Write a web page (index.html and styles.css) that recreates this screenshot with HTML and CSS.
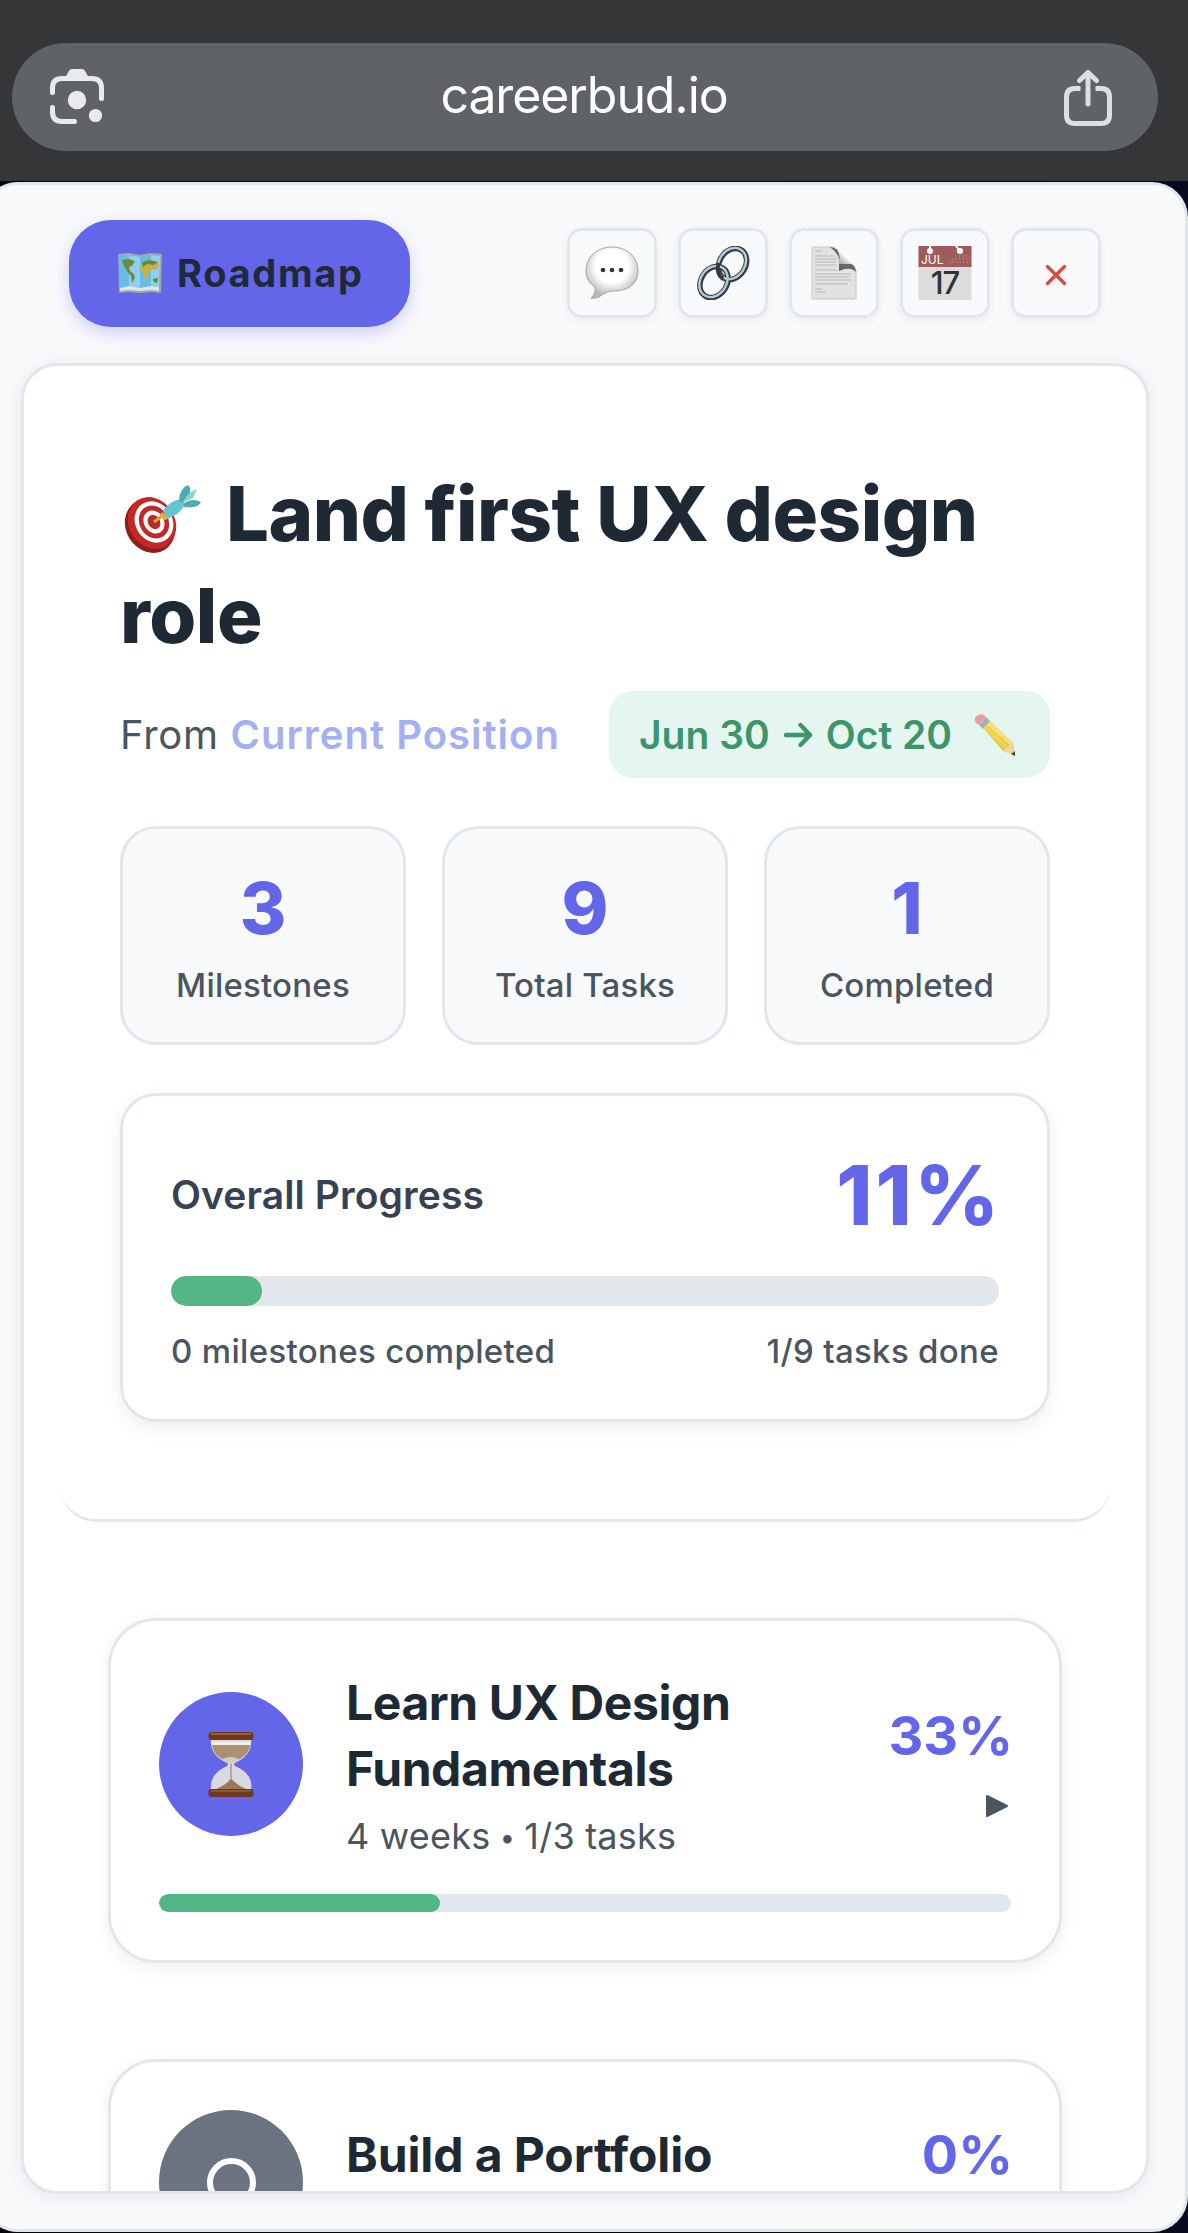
FILE: index.html
```html
<!DOCTYPE html>
<html lang="en">
<head>
    <meta charset="UTF-8">
    <meta name="viewport" content="width=device-width, initial-scale=1.0">
    <title>Roadmap</title>
    <link rel="stylesheet" href="styles.css">
</head>
<body>
    <header class="browser-bar">
        <div class="address">
            <svg class="lens-icon" viewBox="0 0 56 64" fill="none" stroke="#e8eaf0" stroke-width="5" stroke-linecap="round">
                <path d="M3.500 27.500V23Q3.500 13.500 13 13.500H43Q52.500 13.500 52.500 23V33.500M3.500 42.500V47Q3.500 56.500 13 56.500H25.500"/>
                <path d="M16 13L20 6Q21 4 23 4H33Q35 4 36 6L40 13Z" fill="#e8eaf0" stroke="none"/>
                <circle cx="28" cy="35" r="9.200" fill="#e8eaf0" stroke="none"/>
                <circle cx="46.500" cy="50.500" r="6.600" fill="#e8eaf0" stroke="none"/>
            </svg>
            <span class="url">careerbud.io</span>
            <svg class="share-icon" viewBox="0 0 50 60" fill="none" stroke="#dcdfe4" stroke-width="5" stroke-linecap="round" stroke-linejoin="round">
                <path d="M17.500 21.500H12Q3.500 21.500 3.500 30V48Q3.500 56.500 12 56.500H38Q46.500 56.500 46.500 48V30Q46.500 21.500 38 21.500H32.500" stroke-linecap="butt"/>
                <path d="M25 37V5.500M16.500 13.500L25 5.500L33.500 13.500"/>
            </svg>
        </div>
    </header>

    <main class="modal">
        <div class="toolbar">
            <button class="roadmap-btn">
                <svg class="map-icon" viewBox="0 0 46 42">
                    <path d="M1 2L12 1L23 3L34 1L45 2L44 41L34 40L23 41L12 40L2 41Z" fill="#a2a9a5"/>
                    <path d="M3 4L12 3L23 5L34 3L43 4L42 35L34 34L23 36L12 34L3 36Z" fill="#66bdea"/>
                    <path d="M12 3L23 5V36L12 34ZM34 3L43 4L42 35L34 34Z" fill="#8ed0f0"/>
                    <path d="M3 36L12 34L23 36L34 34L42 35V39L34 38L23 39L12 38L3 39Z" fill="#dfe7e6"/>
                    <path d="M5 8L12 7L18 9L15 14L12 15L13 19L17 22L18 26L15 31L14 24L10 19L7 14Z" fill="#718a39"/>
                    <path d="M24 13L29 8L40 9L42 13L39 18L35 17L32 20L30 28L27 27L26 20L22 17Z" fill="#c1b345"/>
                    <path d="M25 10L32 8L41 10L37 13L30 12L26 15ZM36 27L41 26L40 31L37 30Z" fill="#688737"/>
                </svg>
                <span>Roadmap</span>
            </button>
            <div class="actions">
                <button class="icon-btn">
                    <svg width="54" height="54" viewBox="0 0 54 54">
                        <defs>
                            <radialGradient id="bubble" cx="50%" cy="38%" r="58%">
                                <stop offset=".55" stop-color="#fff"/>
                                <stop offset="1" stop-color="#b9b9b9"/>
                            </radialGradient>
                        </defs>
                        <path d="M27 1C42 1 53 11 53 25S42 45 28 45C23 45 18 48 14 51Q9 53 6 52Q11 48 10 41C4 37 1 32 1 25C1 11 12 1 27 1Z" fill="url(#bubble)" stroke="#a5a5a5"/>
                        <g fill="#333"><circle cx="18" cy="24" r="2.300"/><circle cx="27" cy="24" r="2.300"/><circle cx="36" cy="24" r="2.300"/></g>
                    </svg>
                </button>
                <button class="icon-btn">
                    <svg width="54" height="54" viewBox="0 0 54 54" fill="none">
                        <g stroke="#343b42" stroke-width="5.500">
                            <ellipse cx="36.500" cy="18" rx="13" ry="16.500" transform="rotate(33 36.500 18)"/>
                            <ellipse cx="18" cy="36" rx="13" ry="16.500" transform="rotate(33 18 36)"/>
                        </g>
                        <g stroke="#b9cbd9" stroke-width="2.400">
                            <ellipse cx="36" cy="17.500" rx="13" ry="16.500" transform="rotate(33 36 17.500)"/>
                            <ellipse cx="17.500" cy="35.500" rx="13" ry="16.500" transform="rotate(33 17.500 35.500)"/>
                        </g>
                        <path d="M22.500 17Q20 28 27 33" stroke="#343b42" stroke-width="4"/>
                    </svg>
                </button>
                <button class="icon-btn">
                    <svg width="46" height="54" viewBox="0 0 46 54">
                        <defs>
                            <linearGradient id="curl" x1="1" y1="0" x2="0.200" y2="1">
                                <stop offset="0" stop-color="#f3f3f3"/>
                                <stop offset=".5" stop-color="#dcdcdc"/>
                                <stop offset="1" stop-color="#555"/>
                            </linearGradient>
                        </defs>
                        <path d="M1 1H22Q28 2 29 14Q44 16 45 25V53H1Z" fill="#e2e2e2" stroke="#c7c7c7"/>
                        <path d="M20 1Q27 1 29 7L44 21Q46 24 45 28Q40 18 28 25Q30 8 20 1Z" fill="url(#curl)"/>
                        <path d="M19 1Q27 2 28 8L29 14Q26 6 19 1ZM28 18H40Q44 19 45 26Q39 20 28 25Z" fill="#666"/>
                        <path d="M4 5H11M4 10H24M4 13H26M4 16H25M4 19H26M4 24H26M4 28H40M4 31H38M4 34H40M4 38H37M4 43H11M4 46H15" stroke="#b8b8b8"/>
                    </svg>
                </button>
                <button class="icon-btn">
                    <svg width="54" height="54" viewBox="0 0 54 54">
                        <path d="M0.500 0H53.500V54H0.500Z" fill="#dcdcdc"/>
                        <path d="M0.500 0H53.500V21H0.500Z" fill="#a05b5b"/>
                        <path d="M12 0V5M38 0L42 5" stroke="#fff" stroke-width="2"/>
                        <circle cx="12" cy="5" r="3" fill="#fff"/><circle cx="42" cy="5" r="3" fill="#fff"/>
                        <path d="M37 10H52M34 13H52M31 16H52" stroke="#c69999" stroke-dasharray="1.500 2"/>
                        <text class="cal-month" x="3" y="18">JUL</text>
                        <text class="cal-day" x="27" y="48">17</text>
                    </svg>
                </button>
                <button class="icon-btn">
                    <svg class="close-icon" width="22" height="22" viewBox="0 0 22 22" stroke="#d84b41" stroke-width="3.400" stroke-linecap="round">
                        <path d="M2.500 2.500L19.500 19.500M19.500 2.500L2.500 19.500"/>
                    </svg>
                </button>
            </div>
        </div>

        <section class="panel">
            <div class="goal">
                <h1>
                    <svg class="target-icon" viewBox="0 0 78 68">
                        <ellipse cx="27" cy="41" rx="24" ry="28" transform="rotate(-32 27 41)" fill="#8e1d1c"/>
                        <ellipse cx="29" cy="38" rx="23" ry="27" transform="rotate(-32 29 38)" fill="#c22925"/>
                        <ellipse cx="31" cy="37" rx="18.500" ry="21.500" transform="rotate(-32 31 37)" fill="#fff"/>
                        <ellipse cx="31" cy="37" rx="14.500" ry="17" transform="rotate(-32 31 37)" fill="#bd2a27"/>
                        <ellipse cx="31" cy="37" rx="10" ry="12" transform="rotate(-32 31 37)" fill="#fff"/>
                        <ellipse cx="31" cy="37" rx="6" ry="7.500" transform="rotate(-32 31 37)" fill="#b92925"/>
                        <path d="M31 37L43 28" stroke="#d9a534" stroke-width="3"/>
                        <path d="M38 27L47 33L42 35L38 32Z" fill="#e3af35"/>
                        <path d="M40 26Q45 17 57 14L61 21Q57 29 46 33Q42 32 40 26Z" fill="#65c5cd"/>
                        <path d="M56 15Q57 3 65 0Q69 3 66 11L60 19ZM60 19Q69 12 78 17Q75 24 61 22Z" fill="#4eaab4"/>
                        <path d="M59 18L66 8L74 4L70 13Z" fill="#8bd2d6"/>
                    </svg><span>Land first UX design</span> role
                </h1>
                <div class="goal-meta">
                    <p class="from">From <strong>Current Position</strong></p>
                    <div class="dates">
                        <span>Jun 30</span>
                        <svg class="arrow" viewBox="0 0 30 26" fill="none" stroke="#3f956a" stroke-width="4.400" stroke-linecap="round" stroke-linejoin="round"><path d="M3 13H27M17.500 3L27 13L17.500 23"/></svg>
                        <span>Oct 20</span>
                        <svg class="pencil-icon" viewBox="0 0 42 42">
                            <path d="M10 15L16 7L39 29L41 41L29 37Z" fill="#e7c653"/>
                            <path d="M13 11L16 7L39 29L37 32Z" fill="#f6df79"/>
                            <path d="M10 15L13 11L35 33L32 36Z" fill="#f2d350"/>
                            <path d="M29 37L38 28L41 41Z" fill="#eed69f"/>
                            <path d="M37 40L41 37L41 42Z" fill="#444"/>
                            <path d="M5 11L12 3L16 7L9 15Z" fill="#a7adb2"/>
                            <path d="M1 7Q0 2 5 1Q9-1 12 3L5 11Q2 10 1 7Z" fill="#e5a0a0"/>
                        </svg>
                    </div>
                </div>
                <div class="stats">
                    <div class="stat"><b>3</b><span>Milestones</span></div>
                    <div class="stat"><b>9</b><span>Total Tasks</span></div>
                    <div class="stat"><b>1</b><span>Completed</span></div>
                </div>
                <div class="progress-card">
                    <div class="progress-head">
                        <span class="progress-title">Overall Progress</span>
                        <span class="progress-value">11%</span>
                    </div>
                    <div class="track"><div class="fill" style="width: 11%"></div></div>
                    <div class="progress-foot">
                        <span>0 milestones completed</span>
                        <span>1/9 tasks done</span>
                    </div>
                </div>
            </div>

            <div class="milestones">
                <article class="milestone">
                    <div class="milestone-head">
                        <div class="status active">
                            <svg width="46" height="66" viewBox="0 0 46 66">
                                <path d="M3 8H43Q45 24 27 32Q25 33 27 35Q46 43 43 59H3Q1 43 19 35Q21 33 19 32Q1 24 3 8Z" fill="#d8d9e5"/>
                                <path d="M4 14H42Q41 25 27 30L23 32L19 30Q5 25 4 14Z" fill="#aa9173"/>
                                <path d="M4 11H42V14H4Z" fill="#f4eee8"/>
                                <path d="M22.500 30H23.500V48Q29 54 38 58H8Q18 54 22.500 48Z" fill="#9a7a52"/>
                                <path d="M14 28Q23 24 31 28L24 33H22Z" fill="#d1cbc3"/>
                                <rect x="0.500" y="1" width="45" height="8" rx="3" fill="#6b3820"/>
                                <path d="M3 3H43" stroke="#ac6742" stroke-width="1.500"/>
                                <rect x="0.500" y="58" width="45" height="8" rx="3" fill="#6b3820"/>
                                <path d="M3 60H43" stroke="#a25d39" stroke-width="1.500"/>
                            </svg>
                        </div>
                        <div class="milestone-info">
                            <h2>Learn UX Design Fundamentals</h2>
                            <p>4 weeks <span class="dot">•</span> 1/3 tasks</p>
                        </div>
                        <div class="milestone-side">
                            <span class="percent">33%</span>
                            <svg class="caret" viewBox="0 0 24 24"><path d="M2 2L22 12L2 22Z"/></svg>
                        </div>
                    </div>
                    <div class="track thin"><div class="fill" style="width: 33%"></div></div>
                </article>

                <article class="milestone">
                    <div class="milestone-head">
                        <div class="status"><span class="ring"></span></div>
                        <div class="milestone-info short">
                            <h2>Build a Portfolio</h2>
                        </div>
                        <div class="milestone-side">
                            <span class="percent">0%</span>
                            <svg class="caret" viewBox="0 0 24 24"><path d="M2 2L22 12L2 22Z"/></svg>
                        </div>
                    </div>
                    <div class="track thin"></div>
                </article>
            </div>
        </section>
    </main>
</body>
</html>
```
FILE: styles.css
```css
* {
    box-sizing: border-box;
}
body {
    margin: 0;
    height: 2233px;
    overflow: hidden;
    background: linear-gradient(90deg, #050507 60%, #090a20);
    font-family: Inter, "Liberation Sans", sans-serif;
    color: #1f2933;
}
h1, h2, p {
    margin: 0;
}
svg {
    display: block;
    flex-shrink: 0;
}
button {
    font-family: inherit;
    padding: 0;
}

/* Browser bar */
.browser-bar {
    height: 181px;
    padding: 43px 30px 30px 12px;
    background: #353638;
}
.address {
    display: flex;
    align-items: center;
    justify-content: space-between;
    height: 108px;
    padding: 0 45px 0 37px;
    border-radius: 54px;
    background: #5f6266;
}
.lens-icon {
    width: 56px;
    height: 64px;
}
.url {
    padding-bottom: 4px;
    color: #fff;
    font-size: 50px;
    line-height: 60px;
    letter-spacing: -1.1px;
}
.share-icon {
    width: 50px;
    height: 60px;
}

/* Modal */
.modal {
    width: 1206px;
    height: 2050px;
    margin: 1px 0 0 -18px;
    padding: 35px 36px;
    border: 3px solid #e2e7eb;
    border-radius: 36px;
    background: #f8f9fb;
}
.toolbar {
    display: flex;
    align-items: center;
    justify-content: space-between;
    height: 107px;
    padding: 0 48px;
    margin-bottom: 36px;
}
.roadmap-btn {
    display: flex;
    align-items: center;
    gap: 14px;
    width: 341px;
    height: 107px;
    padding: 0 0 2px 48px;
    border: none;
    border-radius: 42px;
    background: #6366e8;
    color: #1f2937;
    font-size: 38px;
    font-weight: 700;
    letter-spacing: 1.7px;
    box-shadow: 0 6px 16px rgba(99, 102, 232, 0.28);
}
.map-icon {
    width: 46px;
    height: 42px;
}
.actions {
    display: flex;
    gap: 21px;
    padding-bottom: 1px;
}
.icon-btn {
    display: flex;
    align-items: center;
    justify-content: center;
    width: 90px;
    height: 90px;
    border: 3px solid #e2e7ea;
    border-radius: 15px;
    background: #f8f9fb;
    box-shadow: 0 3px 8px rgba(30, 50, 60, 0.06);
}
.close-icon {
    margin-top: 4px;
}
.cal-month {
    font-size: 12px;
    fill: #fff;
}
.cal-day {
    font-size: 31px;
    font-weight: 500;
    text-anchor: middle;
    letter-spacing: -1px;
    fill: #333;
}

/* Main panel */
.panel {
    height: 1831px;
    padding: 36px;
    border: 3px solid #e3e7ea;
    border-radius: 36px;
    background: #fff;
    overflow: hidden;
    box-shadow: 0 3px 18px rgba(30, 50, 60, 0.08);
}
.goal {
    height: 1120px;
    padding: 60px 60px 0;
    border-bottom: 3px solid #e3e7ea;
    border-radius: 36px;
}
h1 {
    font-size: 76px;
    line-height: 102px;
    font-weight: 800;
    letter-spacing: -0.5px;
}
h1 span {
    white-space: nowrap;
}
.target-icon {
    display: inline-block;
    width: 78px;
    height: 68px;
    margin: 0 25px 0 3px;
    vertical-align: -12px;
}
.goal-meta {
    display: flex;
    align-items: center;
    justify-content: space-between;
    margin: 25px 0 48px;
}
.from {
    color: #4b5560;
    font-size: 40px;
    letter-spacing: 0.7px;
    white-space: nowrap;
}
.from strong {
    color: #a5b0f3;
    font-weight: 600;
    letter-spacing: 1px;
}
.dates {
    display: flex;
    align-items: center;
    width: 441px;
    height: 87px;
    padding-left: 30px;
    border-radius: 24px;
    background: #e4f6ef;
    color: #3f956a;
    font-size: 39px;
    font-weight: 600;
    white-space: nowrap;
}
.arrow {
    width: 30px;
    height: 26px;
    margin: 0 13px;
}
.pencil-icon {
    width: 42px;
    height: 42px;
    margin-left: 22px;
}

/* Stats */
.stats {
    display: grid;
    grid-template-columns: repeat(3, 1fr);
    gap: 36px;
    margin-bottom: 48px;
}
.stat {
    height: 219px;
    padding-top: 43px;
    border: 3px solid #e3e7ea;
    border-radius: 36px;
    background: #f8f9fb;
    text-align: center;
}
.stat b {
    display: block;
    margin-bottom: 21px;
    color: #6366e8;
    font-size: 71px;
    line-height: 72px;
    font-weight: 800;
}
.stat span {
    display: block;
    color: #4b5560;
    font-size: 33px;
    line-height: 40px;
    font-weight: 500;
    letter-spacing: 0.2px;
}

/* Overall progress */
.progress-card {
    height: 329px;
    padding: 48px;
    border: 3px solid #e3e7ea;
    border-radius: 36px;
    box-shadow: 0 6px 18px rgba(30, 50, 60, 0.08);
}
.progress-head {
    display: flex;
    align-items: center;
    justify-content: space-between;
    height: 103px;
    margin-bottom: 29px;
}
.progress-title {
    padding-bottom: 3px;
    color: #374151;
    font-size: 39px;
    font-weight: 600;
    letter-spacing: 0.1px;
}
.progress-value {
    margin-right: -3px;
    color: #6366e8;
    font-size: 82px;
    font-weight: 800;
    letter-spacing: 3px;
}
.track {
    height: 30px;
    border-radius: 15px;
    background: #e2e7eb;
    overflow: hidden;
}
.fill {
    height: 100%;
    border-radius: 15px;
    background: #54b685;
}
.progress-foot {
    display: flex;
    justify-content: space-between;
    margin-top: 25px;
    color: #4b5560;
    font-size: 33px;
    line-height: 40px;
    font-weight: 500;
    letter-spacing: 0.33px;
}

/* Milestones */
.milestones {
    display: flex;
    flex-direction: column;
    gap: 96px;
    padding: 96px 48px 0;
}
.milestone {
    padding: 48px;
    border: 3px solid #e3e7ea;
    border-radius: 48px;
    background: #fff;
    box-shadow: 0 5px 16px rgba(30, 50, 60, 0.08);
}
.milestone-head {
    display: flex;
    align-items: center;
    margin-bottom: 36px;
}
.status {
    display: flex;
    align-items: center;
    justify-content: center;
    flex-shrink: 0;
    width: 144px;
    height: 144px;
    margin-right: 43px;
    border-radius: 50%;
    background: #6b7280;
}
.status.active {
    background: #6366e8;
}
.ring {
    width: 49px;
    height: 49px;
    border: 6.5px solid #fff;
    border-radius: 50%;
}
.milestone-info {
    flex: 1;
    padding-top: 1px;
}
.milestone-info h2 {
    margin-bottom: 13px;
    font-size: 48px;
    line-height: 66px;
    font-weight: 700;
    letter-spacing: -0.4px;
}
.milestone-info.short {
    padding-bottom: 43px;
}
.milestone-info.short h2 {
    letter-spacing: -0.1px;
}
.milestone-info p {
    color: #4b5560;
    font-size: 36px;
    line-height: 43px;
    letter-spacing: 0.2px;
}
.dot {
    margin: 0 -1px;
    font-size: 27px;
    line-height: 1;
    vertical-align: 2px;
}
.milestone-side {
    display: flex;
    flex-direction: column;
    align-items: flex-end;
    gap: 19px;
}
.percent {
    margin-right: -2px;
    color: #6366e8;
    font-size: 54px;
    line-height: 66px;
    font-weight: 700;
}
.caret {
    width: 24px;
    height: 36px;
    margin-right: 2px;
    fill: #4b5560;
    stroke: #4b5560;
    stroke-width: 2px;
    stroke-linejoin: round;
}
.track.thin {
    height: 18px;
}
```
